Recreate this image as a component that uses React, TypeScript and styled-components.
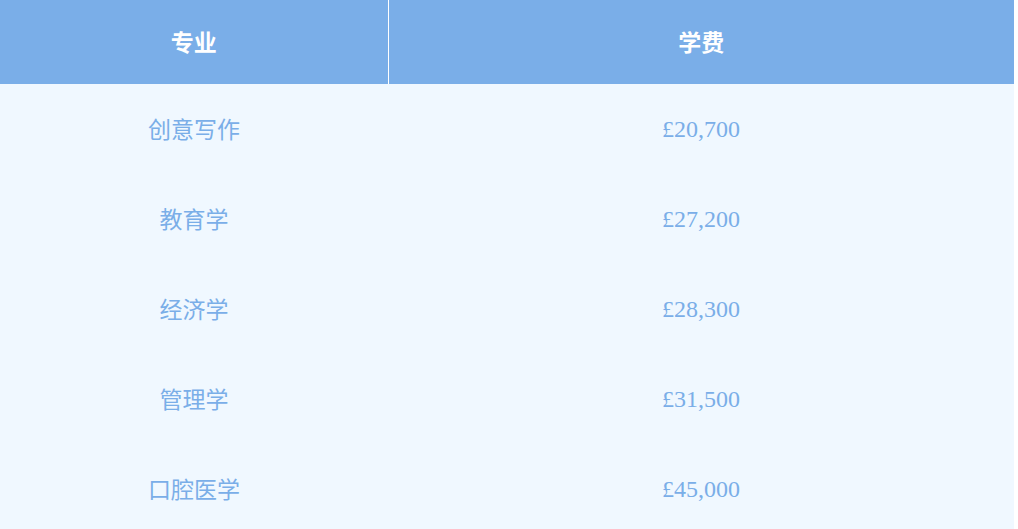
import React from 'react';
import styled, { createGlobalStyle } from 'styled-components';

const GlobalStyle = createGlobalStyle`
  body {
    margin: 0;
    background: #ffffff;
    font-family: "Liberation Serif", "Noto Sans CJK SC", serif;
  }
`;

const FeeTable = styled.table`
  width: 1014px;
  border-collapse: collapse;
  table-layout: fixed;
  background: #f0f8ff;
`;

const HeadCell = styled.th<{ $divider?: boolean }>`
  box-sizing: border-box;
  height: 84px;
  padding: 0 0 3px;
  background: #7aaee8;
  color: #ffffff;
  font-family: "Noto Sans CJK SC", sans-serif;
  font-size: 23px;
  font-weight: bold;
  text-align: center;
  border-right: ${(p) => (p.$divider ? '1px solid #ffffff' : 'none')};
`;

const Cell = styled.td<{ $cjk?: boolean }>`
  height: 90px;
  padding: 0 0 ${(p) => (p.$cjk ? '2px' : '0')};
  box-sizing: border-box;
  color: #7aaee8;
  font-family: ${(p) =>
    p.$cjk ? '"Noto Sans CJK SC", sans-serif' : '"Liberation Serif", serif'};
  font-size: ${(p) => (p.$cjk ? '23px' : '24px')};
  text-align: center;
`;

const fees = [
  { major: '创意写作', fee: '£20,700' },
  { major: '教育学', fee: '£27,200' },
  { major: '经济学', fee: '£28,300' },
  { major: '管理学', fee: '£31,500' },
  { major: '口腔医学', fee: '£45,000' },
];

export default function App() {
  return (
    <>
      <GlobalStyle />
      <FeeTable>
        <colgroup>
          <col style={{ width: 388 }} />
          <col />
        </colgroup>
        <thead>
          <tr>
            <HeadCell $divider>专业</HeadCell>
            <HeadCell>学费</HeadCell>
          </tr>
        </thead>
        <tbody>
          {fees.map((row) => (
            <tr key={row.major}>
              <Cell $cjk>{row.major}</Cell>
              <Cell>{row.fee}</Cell>
            </tr>
          ))}
        </tbody>
      </FeeTable>
    </>
  );
}
